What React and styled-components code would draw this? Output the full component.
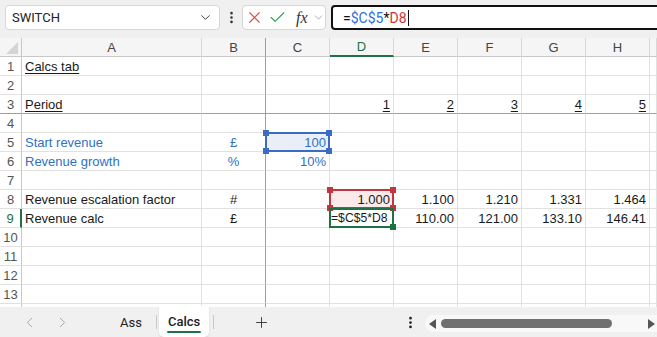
import React from 'react'
import styled, { createGlobalStyle } from 'styled-components'
import { ChevronDown, ChevronLeft, ChevronRight, X, Check, EllipsisVertical, Plus } from 'lucide-react'

const colors = {
  chrome: '#f0f0f0',
  header: '#f5f5f5',
  grid: '#e1e1e1',
  freeze: '#9e9e9e',
  text: '#1a1a1a',
  blue: '#2f72c4',
  refBlue: '#3a6cc6',
  refRed: '#c4353d',
  green: '#1e7145',
}

const GlobalStyle = createGlobalStyle`
  html, body { margin: 0; padding: 0; background: #fff; }
  body { font-family: 'Liberation Sans', Arial, sans-serif; overflow: hidden; }
`

const Page = styled.div`
  width: 657px;
  height: 337px;
  display: flex;
  flex-direction: column;
  overflow: hidden;
  background: #fff;
`

/* ---------- formula bar ---------- */

const TopBar = styled.div`
  height: 38px;
  flex: none;
  box-sizing: border-box;
  padding: 5px 0 0 5px;
  display: flex;
  align-items: flex-start;
  background: ${colors.chrome};
`

const NameBox = styled.div`
  width: 215px;
  height: 25px;
  box-sizing: border-box;
  background: #fff;
  border: 1px solid #d6d6d6;
  border-radius: 4px;
  display: flex;
  align-items: center;
  justify-content: space-between;
  padding: 0 6px 0 6px;
  font-family: Roboto, sans-serif;
  font-size: 13px;
  color: #222;
`

const Dots = styled.div`
  width: 22px;
  height: 25px;
  display: flex;
  align-items: center;
  justify-content: center;
  color: #333;
`

const ActionGroup = styled.div`
  width: 84px;
  height: 25px;
  box-sizing: border-box;
  background: #fff;
  border: 1px solid #d6d6d6;
  border-radius: 4px;
  display: flex;
  align-items: center;
  padding-left: 2px;
  gap: 4px;
`

const Fx = styled.span`
  font-family: 'Liberation Serif', serif;
  font-style: italic;
  font-size: 16px;
  color: #333;
  margin-left: 5px;
`

const FormulaBox = styled.div`
  margin-left: 5px;
  flex: 1;
  height: 25px;
  margin-right: -10px;
  box-sizing: border-box;
  background: #fff;
  border: 2px solid #111;
  border-radius: 4px;
  display: flex;
  align-items: center;
  padding-left: 10px;
  font-family: Roboto, sans-serif;
  font-size: 14px;
  color: #111;
`

const Tok = styled.span`
  color: ${p => p.$c || '#111'};
`

const Caret = styled.span`
  display: inline-block;
  width: 1px;
  height: 16px;
  background: #111;
  margin-left: 1px;
`

/* ---------- sheet grid ---------- */

const Sheet = styled.div`
  height: 269px;
  flex: none;
  overflow: hidden;
  display: grid;
  grid-template-columns: 22px 180px repeat(7, 64px) 1fr;
  grid-auto-rows: 19px;
`

const Corner = styled.div`
  background: ${colors.header};
  border-right: 1px solid #c8c8c8;
  border-bottom: 1px solid #c8c8c8;
  box-sizing: border-box;
  display: flex;
  align-items: flex-end;
  justify-content: flex-end;
  padding: 0 3px 2px 0;
`

const ColHead = styled.div`
  box-sizing: border-box;
  background: ${colors.header};
  border-right: 1px solid ${p => (p.$freeze ? colors.freeze : '#d8d8d8')};
  border-bottom: ${p => (p.$active ? `2px solid ${colors.green}` : '1px solid #c8c8c8')};
  display: flex;
  align-items: center;
  justify-content: center;
  font-size: 13px;
  color: ${p => (p.$active ? colors.green : '#444')};
`

const RowHead = styled.div`
  box-sizing: border-box;
  background: #fff;
  border-right: ${p => (p.$active ? `2px solid ${colors.green}` : '1px solid #c8c8c8')};
  border-bottom: 1px solid ${p => (p.$freeze ? colors.freeze : colors.grid)};
  display: flex;
  align-items: center;
  justify-content: center;
  font-size: 13px;
  color: ${p => (p.$active ? colors.green : '#555')};
`

const Cell = styled.div`
  position: relative;
  box-sizing: border-box;
  border-right: 1px solid ${p => (p.$freezeRight ? colors.freeze : colors.grid)};
  border-bottom: 1px solid ${p => (p.$freezeBottom ? colors.freeze : colors.grid)};
  background: ${p => p.$fill || '#fff'};
  padding: 0 ${p => (p.$tight ? '1px' : '3px')};
  display: flex;
  align-items: center;
  justify-content: ${p => (p.$align === 'right' ? 'flex-end' : p.$align === 'center' ? 'center' : 'flex-start')};
  font-size: ${p => (p.$tight ? '12.2px' : '13px')};
  white-space: nowrap;
  color: ${p => p.$color || colors.text};
  text-decoration: ${p => (p.$u ? 'underline' : 'none')};
  text-underline-offset: 2px;
`

const RefBox = styled.div`
  position: absolute;
  top: -1px;
  left: -1px;
  right: -1px;
  bottom: -1px;
  border: 2px solid ${p => p.$c};
  pointer-events: none;
  z-index: 2;
`

const Handle = styled.span`
  position: absolute;
  width: 6px;
  height: 6px;
  background: ${p => p.$c};
  ${p => (p.$v === 't' ? 'top: -4px;' : 'bottom: -4px;')}
  ${p => (p.$h === 'l' ? 'left: -4px;' : 'right: -4px;')}
`

/* ---------- sheet tabs ---------- */

const TabBar = styled.div`
  flex: 1;
  background: ${colors.chrome};
  display: flex;
  align-items: stretch;
  font-family: Roboto, sans-serif;
`

const NavArrows = styled.div`
  width: 92px;
  margin-right: 16px;
  display: flex;
  align-items: center;
  justify-content: center;
  gap: 16px;
  color: #a0a0a0;
`

const Tab = styled.div`
  display: flex;
  align-items: center;
  justify-content: center;
  padding: 0 ${p => (p.$active ? '9px' : '12px')};
  font-size: 13px;
  font-weight: ${p => (p.$active ? 500 : 400)};
  color: #222;
  position: relative;
  ${p => p.$active && `
    background: #fff;
    border-radius: 0 0 5px 5px;
    box-shadow: 0 1px 2px rgba(0,0,0,0.12);
    margin-top: -1px;
  `}
`

const TabLine = styled.span`
  position: absolute;
  left: 8px;
  right: 8px;
  bottom: 4px;
  height: 2px;
  background: ${colors.green};
  border-radius: 1px;
`

const Sep = styled.div`
  width: 1px;
  height: 14px;
  background: #c8c8c8;
  align-self: center;
  margin: 0 ${p => p.$m || 4}px;
`

const AddTab = styled.div`
  width: 86px;
  display: flex;
  align-items: center;
  justify-content: center;
  color: #333;
`

const Spacer = styled.div`
  flex: 1;
`

const MoreBtn = styled.div`
  width: 30px;
  display: flex;
  align-items: center;
  justify-content: center;
  color: #222;
`

const Scroll = styled.div`
  width: 226px;
  margin: 8px -2px 5px 0;
  background: #f8f8f8;
  border-radius: 9px 0 0 9px;
  display: flex;
  align-items: center;
  padding: 0 4px;
  gap: 5px;
`

const Thumb = styled.div`
  width: 171px;
  height: 9px;
  border-radius: 5px;
  background: #707070;
`

const Arrow = ({ dir }) => (
  <svg width="7" height="10" viewBox="0 0 7 10">
    {dir === 'left'
      ? <polygon points="7,0 7,10 0,5" fill="#555" />
      : <polygon points="0,0 0,10 7,5" fill="#555" />}
  </svg>
)

const num = (v, extra = {}) => ({ v, align: 'right', ...extra })

const COLS = ['A', 'B', 'C', 'D', 'E', 'F', 'G', 'H', 'I']

const ROWS = {
  1: { A: { v: 'Calcs tab', u: true } },
  3: {
    A: { v: 'Period', u: true },
    D: num('1', { u: true }), E: num('2', { u: true }), F: num('3', { u: true }),
    G: num('4', { u: true }), H: num('5', { u: true }),
  },
  5: {
    A: { v: 'Start revenue', color: colors.blue },
    B: { v: '£', align: 'center', color: colors.blue },
    C: num('100', { color: colors.blue, fill: '#e9eef8', ref: colors.refBlue, handles: 'all' }),
  },
  6: {
    A: { v: 'Revenue growth', color: colors.blue },
    B: { v: '%', align: 'center', color: colors.blue },
    C: num('10%', { color: colors.blue }),
  },
  8: {
    A: { v: 'Revenue escalation factor' },
    B: { v: '#', align: 'center' },
    D: num('1.000', { fill: '#fbeaea', ref: colors.refRed, handles: 'all' }),
    E: num('1.100'), F: num('1.210'), G: num('1.331'), H: num('1.464'),
  },
  9: {
    A: { v: 'Revenue calc' },
    B: { v: '£', align: 'center' },
    D: { v: '=$C$5*D8', ref: colors.green, handles: 'br', tight: true },
    E: num('110.00'), F: num('121.00'), G: num('133.10'), H: num('146.41'),
  },
}

const Corners = ({ c, which }) => {
  const list = which === 'br' ? [['b', 'r']] : [['t', 'l'], ['t', 'r'], ['b', 'l'], ['b', 'r']]
  return list.map(([v, h]) => <Handle key={v + h} $c={c} $v={v} $h={h} />)
}

const App = () => {
  // row 14 only peeks in by a few pixels, so it carries no label
  const rows = Array.from({ length: 14 }, (_, i) => i + 1)
  return (
    <Page>
      <GlobalStyle />
      <TopBar>
        <NameBox>
          SWITCH
          <ChevronDown size={15} strokeWidth={1.6} color="#444" />
        </NameBox>
        <Dots><EllipsisVertical size={15} strokeWidth={2.2} /></Dots>
        <ActionGroup>
          <X size={19} strokeWidth={1.4} color="#e0463e" />
          <Check size={19} strokeWidth={1.4} color="#2e9e4f" />
          <Fx>fx</Fx>
          <ChevronDown size={13} strokeWidth={1.5} color="#999" />
        </ActionGroup>
        <FormulaBox>
          <Tok>=</Tok>
          <Tok $c="#2f6fd6">$C$5</Tok>
          <Tok>*</Tok>
          <Tok $c="#d13438">D8</Tok>
          <Caret />
        </FormulaBox>
      </TopBar>

      <Sheet>
        <Corner>
          <svg width="12" height="12" viewBox="0 0 12 12">
            <polygon points="12,0 12,12 0,12" fill="#d4d4d4" />
          </svg>
        </Corner>
        {COLS.map(c => (
          <ColHead key={c} $active={c === 'D'} $freeze={c === 'B'}>{c === 'I' ? '' : c}</ColHead>
        ))}
        {rows.map(r => (
          <React.Fragment key={r}>
            <RowHead $active={r === 9} $freeze={r === 3}>{r < 14 ? r : ''}</RowHead>
            {COLS.map(c => {
              const d = (ROWS[r] || {})[c] || {}
              return (
                <Cell
                  key={c}
                  $align={d.align}
                  $color={d.color}
                  $u={d.u}
                  $fill={d.fill}
                  $tight={d.tight}
                  $freezeRight={c === 'B'}
                  $freezeBottom={r === 3}
                >
                  {d.v}
                  {d.ref && (
                    <RefBox $c={d.ref}>
                      <Corners c={d.ref} which={d.handles} />
                    </RefBox>
                  )}
                </Cell>
              )
            })}
          </React.Fragment>
        ))}
      </Sheet>

      <TabBar>
        <NavArrows>
          <ChevronLeft size={17} strokeWidth={1.3} />
          <ChevronRight size={17} strokeWidth={1.3} />
        </NavArrows>
        <Tab>Ass</Tab>
        <Sep $m={2} />
        <Tab $active>Calcs<TabLine /></Tab>
        <Sep $m={4} />
        <AddTab><Plus size={17} strokeWidth={1.3} /></AddTab>
        <Spacer />
        <MoreBtn><EllipsisVertical size={15} strokeWidth={2.4} /></MoreBtn>
        <Scroll>
          <Arrow dir="left" />
          <Thumb />
          <Spacer />
          <Arrow dir="right" />
        </Scroll>
      </TabBar>
    </Page>
  )
}

export default App
